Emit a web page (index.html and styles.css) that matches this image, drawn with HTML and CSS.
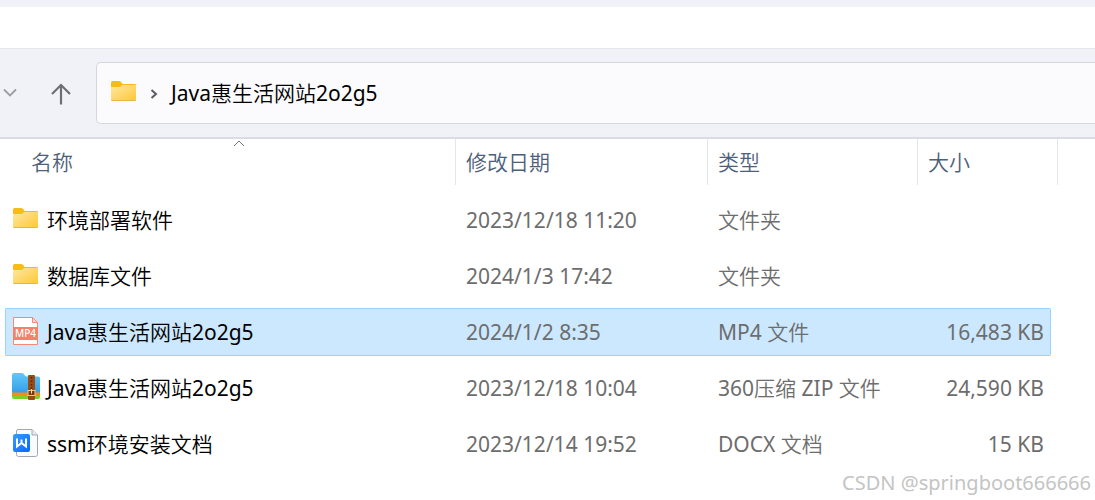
FILE: index.html
```html
<!DOCTYPE html>
<html lang="zh-CN">
<head>
    <meta charset="UTF-8">
    <meta name="viewport" content="width=device-width, initial-scale=1.0">
    <title>Java惠生活网站2o2g5</title>
    <link rel="stylesheet" href="styles.css">
</head>
<body>

    <!-- Shared folder icon -->
    <svg class="defs" width="0" height="0" aria-hidden="true">
        <defs>
            <linearGradient id="folderFill" x1="0" y1="0" x2="1" y2="1">
                <stop offset="0" stop-color="#ffe8a2"/>
                <stop offset="1" stop-color="#fdc736"/>
            </linearGradient>
            <linearGradient id="zipFill" x1="0" y1="0" x2="0" y2="1">
                <stop offset="0" stop-color="#62c8f8"/>
                <stop offset="1" stop-color="#349fe8"/>
            </linearGradient>
            <linearGradient id="docFill" x1="0" y1="0" x2="1" y2="1">
                <stop offset="0" stop-color="#3a9bff"/>
                <stop offset="1" stop-color="#0568fc"/>
            </linearGradient>
            <symbol id="folder" viewBox="0 1 28 28">
                <path d="M1 5.500Q1 4 2.500 4H9.500Q10.500 4 11.500 5.500L12.500 7H25Q26 7 26 8V12H1Z" fill="#fbb91b"/>
                <path d="M1 10H9.500Q10.500 10 11.500 8.500L12.500 8H26V22.500Q26 24 24.500 24H2.500Q1 24 1 22.500Z" fill="url(#folderFill)"/>
                <path d="M1.500 23.500H25.500" stroke="#e6b744" stroke-width="1"/>
            </symbol>
        </defs>
    </svg>

    <div class="title-strip"></div>
    <div class="command-bar"></div>

    <header class="toolbar">
        <button type="button" class="btn-recent" aria-label="最近浏览的位置">
            <svg width="14" height="10" viewBox="0 0 14 10"><path d="M1 1.500L7 7.500L13 1.500" fill="none" stroke="#9c9da1" stroke-width="1.800"/></svg>
        </button>
        <button type="button" class="btn-up" aria-label="上移">
            <svg width="22" height="22" viewBox="0 0 22 22"><path d="M11 21.500V2M2 11L11 2L20 11" fill="none" stroke="#6e6f73" stroke-width="2.200"/></svg>
        </button>
        <nav class="address">
            <svg class="icon" aria-hidden="true"><use href="#folder"/></svg>
            <svg class="separator" width="8" height="12" viewBox="0 0 8 12"><path d="M1.500 2L6 6L1.500 10" fill="none" stroke="#5c5c60" stroke-width="2"/></svg>
            <a href="#">Java惠生活网站2o2g5</a>
        </nav>
    </header>

    <main>
        <table class="files">
            <colgroup>
                <col>
                <col class="col-date">
                <col class="col-type">
                <col class="col-size">
                <col class="col-end">
            </colgroup>
            <thead>
                <tr>
                    <th class="name">
                        <button type="button">名称</button>
                        <svg class="sort" width="12" height="7" viewBox="0 0 12 7"><path d="M1 6L6 1L11 6" fill="none" stroke="#707070" stroke-width="1"/></svg>
                    </th>
                    <th><button type="button">修改日期</button></th>
                    <th><button type="button">类型</button></th>
                    <th colspan="2"><button type="button">大小</button></th>
                </tr>
            </thead>
            <tbody>
                <tr>
                    <td><div class="file"><svg class="icon" aria-hidden="true"><use href="#folder"/></svg>环境部署软件</div></td>
                    <td>2023/12/18 11:20</td>
                    <td>文件夹</td>
                    <td></td>
                </tr>
                <tr>
                    <td><div class="file"><svg class="icon" aria-hidden="true"><use href="#folder"/></svg>数据库文件</div></td>
                    <td>2024/1/3 17:42</td>
                    <td>文件夹</td>
                    <td></td>
                </tr>
                <tr class="selected">
                    <td>
                        <div class="file">
                            <svg class="icon" viewBox="0 0 28 28" aria-hidden="true">
                                <path d="M1.500 .5H20.500L25.500 5.500V27.500H1.500Z" fill="#fff" stroke="#f28b72"/>
                                <path d="M20.500 .5V5.500H25.500Z" fill="#fbd9d0" stroke="#f28b72"/>
                                <rect x="1" y="10" width="25" height="13" fill="#f28369"/>
                                <text x="13.500" y="20" text-anchor="middle" class="badge">MP4</text>
                            </svg>Java惠生活网站2o2g5
                        </div>
                    </td>
                    <td>2024/1/2 8:35</td>
                    <td>MP4 文件</td>
                    <td class="size">16,483 KB</td>
                </tr>
                <tr>
                    <td>
                        <div class="file">
                            <svg class="icon" viewBox="0 0 28 28" aria-hidden="true">
                                <path d="M0 18H28V24Q28 26 26 26H2Q0 26 0 24Z" fill="#82ca2d"/>
                                <path d="M0 16H28V23H0Z" fill="#fb8b10"/>
                                <path d="M0 2Q0 0 2 0H10Q11.500 0 12.500 2Q13.500 3.500 15 3.500H26Q28 3.500 28 5.500V19.500H0Z" fill="url(#zipFill)"/>
                                <rect x="16" y="2" width="7" height="25" rx="1" fill="#9a4c14"/>
                                <path d="M19.500 4V16" stroke="#51250b" stroke-width="1.500" stroke-dasharray="1.500 2"/>
                                <rect x="16" y="17.500" width="7" height="5" fill="#793b0e" stroke="#f4c978"/>
                                <path d="M19.500 16V20.500" stroke="#ffe0a0"/>
                            </svg>Java惠生活网站2o2g5
                        </div>
                    </td>
                    <td>2023/12/18 10:04</td>
                    <td>360压缩 ZIP 文件</td>
                    <td class="size">24,590 KB</td>
                </tr>
                <tr>
                    <td>
                        <div class="file">
                            <svg class="icon" viewBox="0 0 28 28" aria-hidden="true">
                                <path d="M6 .5H20L25.500 6V25.500Q25.500 27.500 23.500 27.500H6.500Q4.500 27.500 4.500 25.500V2Q4.500 .5 6 .5Z" fill="#fafbfd" stroke="#a0a8b8"/>
                                <path d="M20 .5V6H25.500" fill="#e8ebf1" stroke="#a0a8b8"/>
                                <rect x="1" y="5" width="17" height="18" rx="2" fill="url(#docFill)"/>
                                <path d="M5 9.500V17.500L9.500 14L14 17.500V9.500M9.500 10.500V14" fill="none" stroke="#fff" stroke-width="2"/>
                            </svg>ssm环境安装文档
                        </div>
                    </td>
                    <td>2023/12/14 19:52</td>
                    <td>DOCX 文档</td>
                    <td class="size">15 KB</td>
                </tr>
            </tbody>
        </table>
    </main>

    <div class="watermark">CSDN @springboot666666</div>

</body>
</html>
```

FILE: styles.css
```css
:root {
    --chrome-color: #f0f2f8;
    --line-color: #e5e6e8;
    --header-text-color: #4c607a;
    --muted-text-color: #6d6d6d;
    --selected-color: #cce8ff;
    --selected-border: #99d1ff;
}

* {
    box-sizing: border-box;
}

body {
    margin: 0;
    min-height: 100vh;
    position: relative;
    background-color: #fff;
    color: #000;
    font-family: "Noto Sans", "Noto Sans CJK SC DemiLight", "Noto Sans CJK SC Light", "Noto Sans CJK SC", sans-serif;
    font-size: 21px;
    font-weight: 400;
    line-height: 28px;
}

button {
    border: none;
    padding: 0;
    background: none;
    color: inherit;
    font: inherit;
    cursor: pointer;
}

svg {
    display: block;
    flex-shrink: 0;
}

.defs {
    position: absolute;
}

.icon {
    width: 28px;
    height: 28px;
    margin-bottom: 2px;
}

.title-strip {
    height: 7px;
    background-color: var(--chrome-color);
}

.command-bar {
    height: 42px;
    border-bottom: 1px solid var(--line-color);
}

/* Navigation buttons and address box */
.toolbar {
    display: flex;
    align-items: center;
    height: 90px;
    padding: 0 0 0 4px;
    background-color: var(--chrome-color);
    border-bottom: 2px solid #dadce1;
}

.btn-recent {
    margin-left: -1px;
}

.btn-up {
    margin: 2px 24px 0 33px;
}

.address {
    flex: 1;
    display: flex;
    align-items: center;
    height: 62px;
    padding-left: 13px;
    background-color: #fbfbfe;
    border: 1px solid #d6d7da;
    border-right: none;
    border-radius: 5px 0 0 5px;
}

.separator {
    margin: 2px 13px 0 12px;
}

.address a {
    color: #000;
    text-decoration: none;
}

/* File list */
.files {
    width: calc(100% - 42px);
    margin: -8px 0 0 5px;
    table-layout: fixed;
    border-collapse: separate;
    border-spacing: 0 8px;
}

.col-date {
    width: 252px;
}

.col-type {
    width: 210px;
}

.col-size {
    width: 134px;
}

.col-end {
    width: 7px;
}

th {
    position: relative;
    height: 49px;
    padding: 0 0 3px;
    color: var(--header-text-color);
    font-weight: 400;
    text-align: left;
}

th button {
    display: block;
    width: 100%;
    height: 46px;
    padding-left: 11px;
    text-align: left;
}

th.name button {
    padding-left: 26px;
}

th::after {
    content: "";
    position: absolute;
    top: 0;
    right: -1px;
    width: 1px;
    height: 46px;
    background-color: var(--line-color);
}

th:last-child::after {
    right: 0;
}

.sort {
    position: absolute;
    top: 1px;
    left: calc(50% + 3px);
}

td {
    height: 48px;
    padding: 0 0 0 11px;
    border: 1px solid transparent;
    border-width: 1px 0;
    color: var(--muted-text-color);
    white-space: nowrap;
}

td:first-child {
    padding-left: 6px;
    border-left-width: 1px;
    border-radius: 2px 0 0 2px;
    color: #000;
}

td:nth-child(4) {
    border-right-width: 1px;
    border-radius: 0 2px 2px 0;
}

.size {
    padding-right: 6px;
    text-align: right;
}

.selected td {
    background-color: var(--selected-color);
    border-color: var(--selected-border);
}

.file {
    display: flex;
    align-items: center;
    gap: 7px;
}

.badge {
    fill: #fff;
    font-size: 10px;
    font-weight: 500;
}

.watermark {
    position: absolute;
    right: 4px;
    bottom: 3px;
    color: #c4c4c4;
    font-size: 20px;
}
```
